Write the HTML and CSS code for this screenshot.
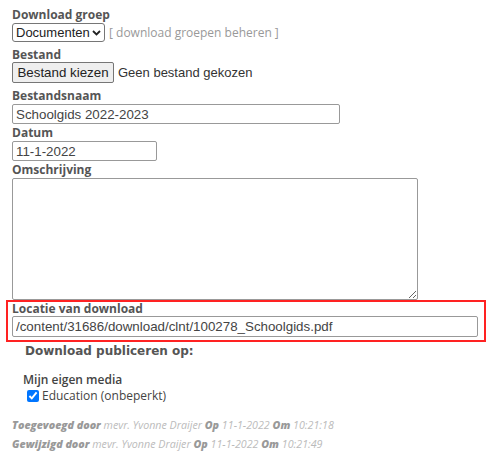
FILE: index.html
```html
<!DOCTYPE html>
<html lang="nl">
<head>
    <meta charset="UTF-8">
    <meta name="viewport" content="width=device-width, initial-scale=1.0">
    <title>Download bewerken</title>
    <link rel="stylesheet" href="styles.css">
</head>
<body>
    <form class="download-form">
        <div class="field">
            <label class="field-label">Download groep</label>
            <div class="field-row group-row">
                <span class="select-wrap">
                    <select class="group-select">
                        <option>Documenten</option>
                    </select>
                    <svg class="select-arrow" width="9" height="6" viewBox="0 0 9 6">
                        <path d="M1 1 L4.5 4.5 L8 1" fill="none" stroke="#222" stroke-width="1.8"/>
                    </svg>
                </span>
                <span class="manage-link">[ download groepen beheren ]</span>
            </div>
        </div>

        <div class="field">
            <label class="field-label">Bestand</label>
            <div class="field-row file-row">
                <button type="button" class="file-button">Bestand kiezen</button>
                <span class="file-name">Geen bestand gekozen</span>
            </div>
        </div>

        <div class="field">
            <label class="field-label">Bestandsnaam</label>
            <input type="text" class="text-input name-input" value="Schoolgids 2022-2023">
        </div>

        <div class="field">
            <label class="field-label">Datum</label>
            <input type="text" class="text-input date-input" value="11-1-2022">
        </div>

        <div class="field">
            <label class="field-label">Omschrijving</label>
            <textarea class="description"></textarea>
        </div>

        <!-- gemarkeerd blok -->
        <div class="field highlight">
            <label class="field-label">Locatie van download</label>
            <input type="text" class="text-input location-input" value="/content/31686/download/clnt/100278_Schoolgids.pdf">
        </div>

        <div class="publish">
            <h3 class="publish-title">Download publiceren op:</h3>
            <h4 class="media-title">Mijn eigen media</h4>
            <label class="media-option">
                <input type="checkbox" checked>
                <span>Education (onbeperkt)</span>
            </label>
        </div>

        <div class="meta">
            <p><b>Toegevoegd door</b> mevr. Yvonne Draijer <b>Op</b> 11-1-2022 <b>Om</b> 10:21:18</p>
            <p><b>Gewijzigd door</b> mevr. Yvonne Draijer <b>Op</b> 11-1-2022 <b>Om</b> 10:21:49</p>
        </div>
    </form>
</body>
</html>
```

FILE: styles.css
```css
* {
    margin: 0;
    padding: 0;
    box-sizing: border-box;
}

body {
    font-family: 'Open Sans', sans-serif;
    background-color: #fff;
    color: #555;
}

.download-form {
    padding: 7px 0 0 12px;
    width: 486px;
}

.field {
    display: flex;
    flex-direction: column;
    align-items: flex-start;
}

.field-label {
    font-size: 12px;
    font-weight: 700;
    line-height: 16px;
    color: #555;
}

.field-row {
    display: flex;
    align-items: center;
}

.group-row {
    gap: 4px;
    margin-bottom: 5px;
}

.file-row {
    gap: 4px;
    margin: -1px 0 5px;
}

.select-wrap {
    position: relative;
    display: flex;
}

.group-select {
    appearance: none;
    font-family: 'Liberation Sans', Arial, sans-serif;
    font-size: 13px;
    width: 93px;
    height: 19px;
    padding: 0 10px 0 3px;
    color: #222;
    background-color: #fff;
    border: 1px solid #767676;
    border-radius: 3px;
}

.select-arrow {
    position: absolute;
    right: 4px;
    top: 7px;
    pointer-events: none;
}

.manage-link {
    font-size: 12px;
    color: #999;
}

.file-button {
    font-family: 'Liberation Sans', Arial, sans-serif;
    font-size: 13.33px;
    color: #222;
    width: 102px;
    height: 21px;
    background-color: #efefef;
    border: 1px solid #767676;
    border-radius: 2px;
}

.file-name {
    font-family: 'Liberation Sans', Arial, sans-serif;
    font-size: 13px;
    color: #333;
}

.text-input {
    font-family: 'Liberation Sans', Arial, sans-serif;
    font-size: 13.33px;
    color: #444;
    height: 20px;
    padding: 1px 3px;
    border: 1px solid #999;
    border-radius: 2px;
}

.name-input {
    width: 328px;
    margin-bottom: 1px;
}

.date-input {
    width: 145px;
    margin-bottom: 1px;
}

.description {
    display: block;
    width: 406px;
    height: 122px;
    border: 1px solid #999;
    border-radius: 2px;
}

.highlight {
    margin: 0 0 0 -6px;
    width: 480px;
    padding: 0 5px 3px 4px;
    border: 2px solid #f22;
}

.highlight .field-label {
    line-height: 14px;
}

.location-input {
    width: 466px;
    height: 21px;
}

.publish {
    padding-left: 11px;
}

.publish-title {
    font-family: 'DejaVu Sans', Verdana, sans-serif;
    font-size: 12px;
    line-height: 16px;
    font-weight: 700;
    color: #555;
    margin: 1px 0 13px 2px;
}

.media-title {
    font-size: 12px;
    line-height: 16px;
    font-weight: 600;
    color: #444;
}

.media-option {
    display: flex;
    align-items: center;
    gap: 3px;
    height: 17px;
    margin-top: -1px;
    font-size: 12px;
    color: #444;
    padding-left: 4px;
}

.media-option input {
    margin: 0;
    width: 12px;
    height: 12px;
}

.meta {
    margin-top: 12px;
    font-size: 10.7px;
    font-style: italic;
    color: #bbb;
    line-height: 19px;
}

.meta b {
    color: #999;
    font-weight: 800;
}
```
